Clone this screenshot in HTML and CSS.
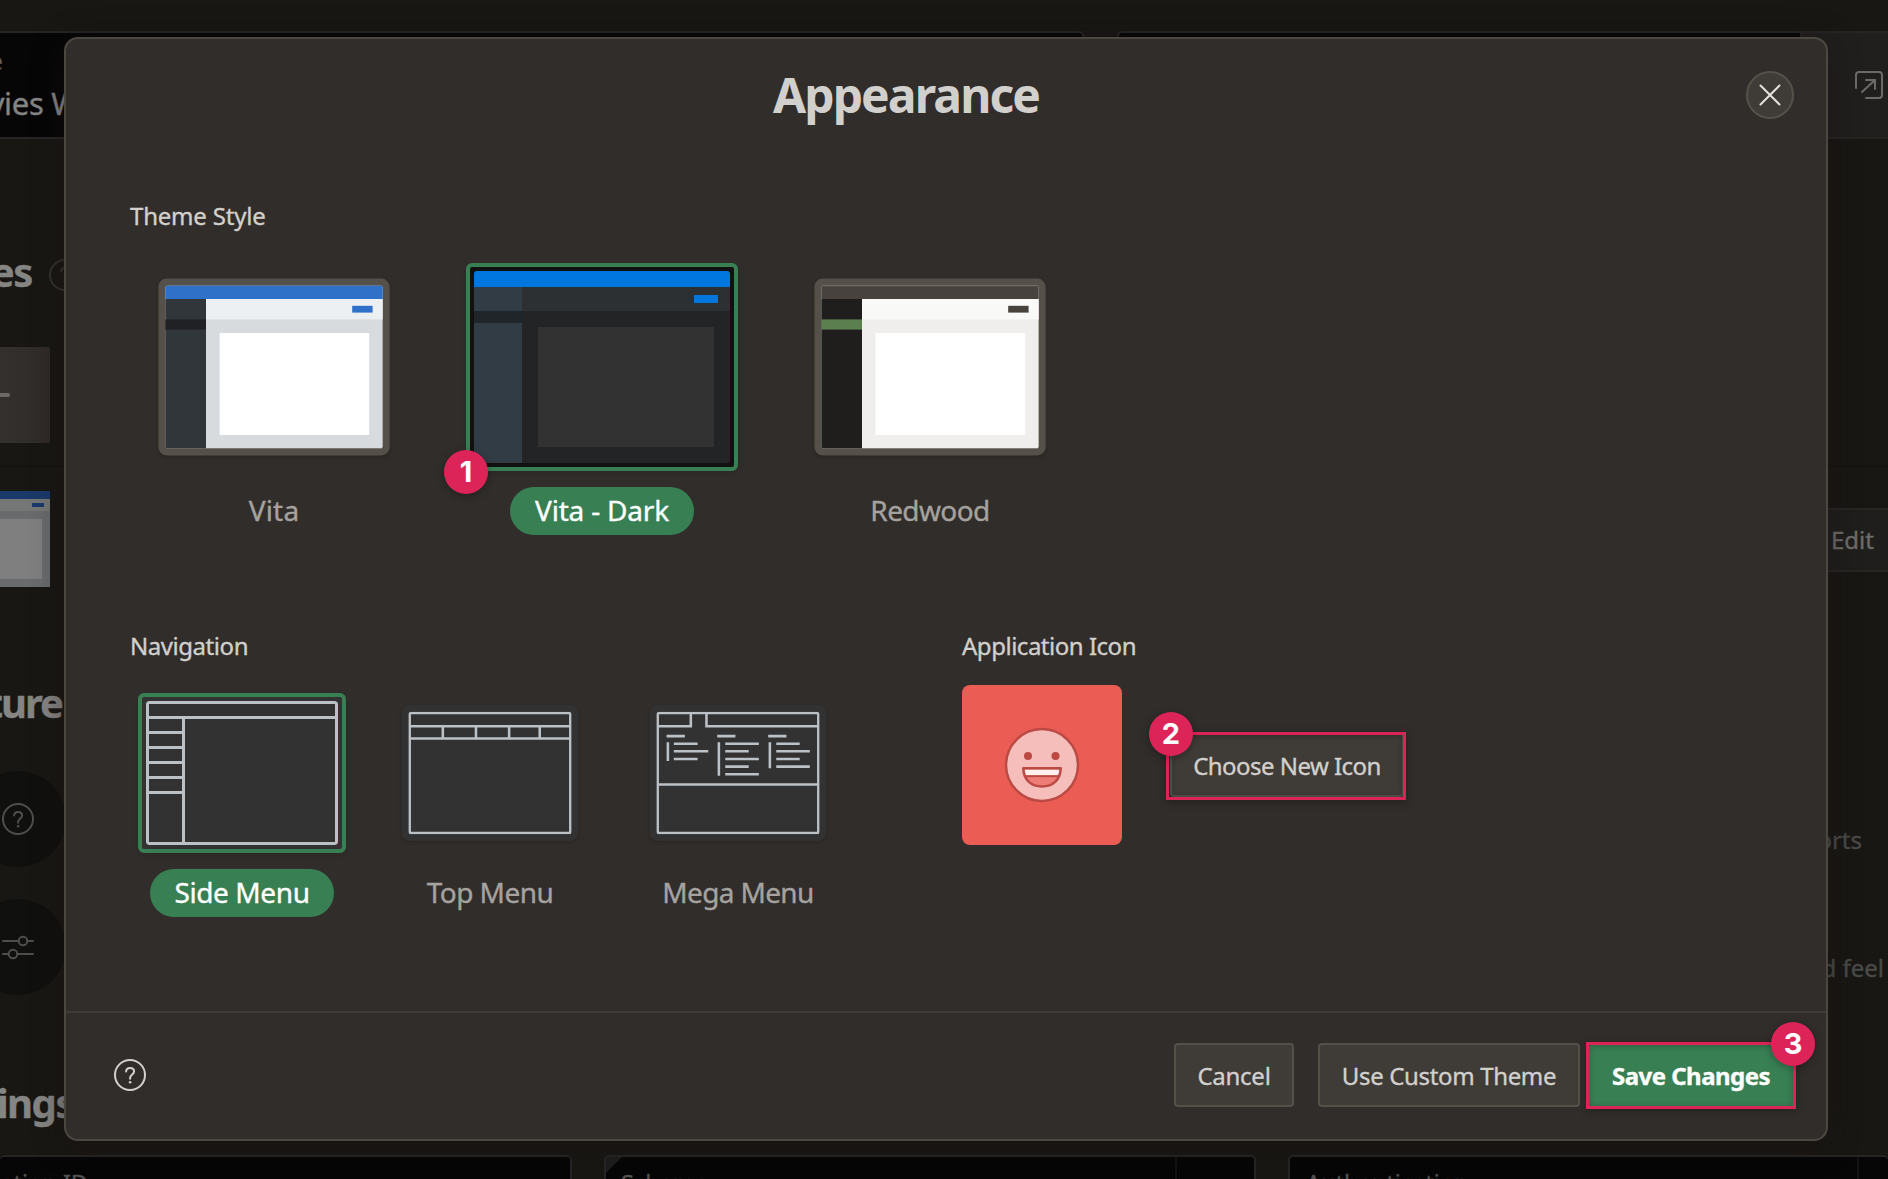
FILE: index.html
```html
<!DOCTYPE html>
<html lang="en">
<head>
<meta charset="utf-8">
<title>Appearance</title>
<link rel="stylesheet" href="styles.css">
</head>
<body>
<svg class="defs" width="0" height="0">
  <symbol id="help" viewBox="0 0 32 32">
    <circle cx="16" cy="16" r="15" fill="none" stroke="currentColor" stroke-width="2"/>
    <path d="M12.1 12.6c0-2.3 1.7-3.7 4-3.7s4 1.5 4 3.6c0 2.9-4 3.2-4 6.5v.8" fill="none" stroke="currentColor" stroke-width="2" stroke-linecap="round"/>
    <circle cx="16.1" cy="23.2" r="1.3" fill="currentColor"/>
  </symbol>
</svg>

<div class="page">
  <div class="page-bar"></div>
  <div class="page-head">
    <div class="panel panel-name">
      <span class="name-label">Name</span>
      <span class="name-value">Movies Watchlist</span>
    </div>
    <div class="panel panel-look">
      <div class="open-cell">
        <svg width="28" height="28" viewBox="0 0 28 28" fill="none" stroke="currentColor" stroke-width="2" stroke-linecap="round" stroke-linejoin="round"><path d="M1 17V4a3 3 0 0 1 3-3h20a3 3 0 0 1 3 3v20a3 3 0 0 1-3 3H11M7 21 20 9M11 9h9v9"/></svg>
      </div>
    </div>
  </div>

  <div class="page-main">
    <div class="left">
      <div class="left-title t1"><span>Pages</span><svg class="hint" width="32" height="32"><use href="#help"/></svg></div>
      <div class="add-box"><i></i></div>
      <div class="rule"></div>
      <svg class="mini" width="50" height="96" viewBox="0 0 50 96">
        <rect width="50" height="96" fill="#696b6d"/><rect width="50" height="8" fill="#1b3969"/>
        <rect y="8" width="50" height="12" fill="#747776"/><rect x="32" y="12" width="12" height="4" fill="#1b3969"/>
        <rect y="28" width="42" height="60" fill="#7f7f7f"/>
      </svg>
      <div class="left-title t2"><span>Feature</span></div>
      <div class="disc d1"><svg width="32" height="32"><use href="#help"/></svg></div>
      <div class="disc d2"><svg width="32" height="32" viewBox="0 0 32 32" fill="none" stroke="currentColor" stroke-width="2" stroke-linecap="round"><path d="M1 10h15.500M25.500 10H31M1 23h5.500M15.500 23H31"/><circle cx="21" cy="10" r="4.300"/><circle cx="11" cy="23" r="4.300"/></svg></div>
      <div class="left-title t3"><span>Settings</span></div>
    </div>
    <div class="right">
      <div class="rule"></div>
      <div class="edit">Edit</div>
      <div class="note n1">Reports</div>
      <div class="note n2">and feel</div>
    </div>
  </div>

  <div class="page-foot">
    <div class="panel p1"><span>Application ID</span></div>
    <div class="panel p2"><span>Schema</span></div>
    <div class="panel p3"><span>Authentication</span></div>
  </div>
</div>

<div class="dialog">
  <div class="dialog-head">
    <h1>Appearance</h1>
    <button class="close"><svg width="22" height="22" viewBox="0 0 22 22"><path d="M1.500 1.500l19 19M20.500 1.500l-19 19" stroke="currentColor" stroke-width="2" stroke-linecap="round"/></svg></button>
  </div>

  <div class="dialog-body">
    <h2 class="theme-h">Theme Style</h2>
    <div class="themes">
      <div class="option">
        <div class="card theme">
          <svg width="256" height="192" viewBox="0 0 256 192">
            <rect width="256" height="192" fill="#d8dbde"/><rect width="256" height="16" fill="#2f70c8"/>
            <rect x="48" y="16" width="208" height="24" fill="#ecf0f2"/>
            <rect y="16" width="48" height="176" fill="#31363a"/><rect y="40" width="48" height="12" fill="#202124"/>
            <rect x="220" y="24" width="24" height="8" fill="#2f70c8"/><rect x="64" y="56" width="176" height="120" fill="#fff"/>
          </svg>
        </div>
        <span class="name s-vita">Vita</span>
      </div>
      <div class="option selected">
        <div class="card theme dark">
          <svg width="256" height="192" viewBox="0 0 256 192">
            <rect width="256" height="192" fill="#222426"/><rect width="256" height="16" fill="#0076df"/>
            <rect x="48" y="16" width="208" height="24" fill="#2c3033"/>
            <rect y="16" width="48" height="176" fill="#323c45"/><rect y="40" width="48" height="12" fill="#1f2529"/>
            <rect x="220" y="24" width="24" height="8" fill="#0076df"/><rect x="64" y="56" width="176" height="120" fill="#323232"/>
          </svg>
          <b class="badge b1">1</b>
        </div>
        <span class="name s-dark">Vita - Dark</span>
      </div>
      <div class="option">
        <div class="card theme">
          <svg width="256" height="192" viewBox="0 0 256 192">
            <rect width="256" height="192" fill="#efeeed"/><rect width="256" height="16" fill="#47423e"/><path d="M0 .5h256" stroke="#76716c"/>
            <rect x="48" y="16" width="208" height="24" fill="#f9f9f8"/>
            <rect y="16" width="48" height="176" fill="#201e1c"/><rect y="40" width="48" height="12" fill="#5c7f4f"/>
            <rect x="220" y="24" width="24" height="8" fill="#47423e"/><rect x="64" y="56" width="176" height="120" fill="#fff"/>
          </svg>
        </div>
        <span class="name s-red">Redwood</span>
      </div>
    </div>

    <div class="split">
      <div class="nav-col">
        <h2 class="nav-h">Navigation</h2>
        <div class="navs">
          <div class="option selected">
            <div class="card nav">
              <svg width="192" height="144" viewBox="0 0 192 144" class="wire"><rect x="1.500" y="1.500" width="189" height="141" rx="1.500"/><path d="M1 16.500h190M37.500 16.500v126M1 31.500h36M1 46.500h36M1 61.500h36M1 76.500h36M1 91.500h36"/></svg>
            </div>
            <span class="name s-side">Side Menu</span>
          </div>
          <div class="option">
            <div class="card nav">
              <svg width="192" height="144" viewBox="0 0 192 144" class="wire"><rect x="1.500" y="1.500" width="189" height="141" rx="1.500"/><path d="M1 16.900h190M1 31.400h190M40.500 17v14M79.500 17v14M118.500 17v14M154.500 17v14"/></svg>
            </div>
            <span class="name s-top">Top Menu</span>
          </div>
          <div class="option">
            <div class="card nav">
              <svg width="192" height="144" viewBox="0 0 192 144" class="wire"><rect x="1.500" y="1.500" width="189" height="141" rx="1.500"/><path d="M1 16.900h39.500V1M58.900 1v15.900H191M1 85.500h190"/><path d="M12 28.600h21.500M71.500 28.600H93M131.500 28.600H153M13.500 35.700V58M73.500 35.700v39.600M133.500 35.700v30.600M20.500 37.600h28M20.500 46.500H61M20.500 55.600h28M81 37.600h39.500M81 46.500h27.600M81 55.600h39.500M81 64.500h27.600M81 73.500h39.500M141 37.600h27.600M141 46.500h39.500M141 55.600h27.600M141 64.500h39.500"/></svg>
            </div>
            <span class="name s-mega">Mega Menu</span>
          </div>
        </div>
      </div>
      <div class="icon-col">
        <h2 class="icon-h">Application Icon</h2>
        <div class="icon-row">
          <svg class="app-icon" width="160" height="160" viewBox="0 0 160 160">
            <rect width="160" height="160" rx="8" fill="#eb5c55"/>
            <circle cx="80" cy="80" r="36" fill="#f5beba" stroke="#bc4a44" stroke-width="2.500"/>
            <circle cx="66" cy="71" r="4" fill="#bc4a44"/><circle cx="93.500" cy="71" r="4" fill="#bc4a44"/>
            <path d="M61.300 83.300h37.400c0 11.200-7.800 18.100-18.700 18.100s-18.700-6.900-18.700-18.100z" fill="#ef7d77"/>
            <path d="M62.500 84.500h35l-1.200 5.800H63.700z" fill="#fdefee"/>
            <path d="M64 91.200h32" stroke="#bc4a44" stroke-width="2"/>
            <path d="M61.300 83.300h37.400c0 11.200-7.800 18.100-18.700 18.100s-18.700-6.900-18.700-18.100z" fill="none" stroke="#bc4a44" stroke-width="2.500" stroke-linejoin="round"/>
          </svg>
          <div class="marked"><button class="btn choose">Choose New Icon</button><b class="badge b2">2</b></div>
        </div>
      </div>
    </div>
  </div>

  <div class="dialog-foot">
    <svg class="foot-help" width="32" height="32"><use href="#help"/></svg>
    <button class="btn cancel">Cancel</button>
    <button class="btn custom">Use Custom Theme</button>
    <div class="marked save-wrap"><button class="btn save">Save Changes</button><b class="badge b3">3</b></div>
  </div>
</div>
</body>
</html>
```
FILE: styles.css
```css
* { box-sizing: border-box; }
body {
  margin: 0; width: 1888px; height: 1179px; overflow: hidden; position: relative;
  background: #181714; font-family: "Noto Sans", "Open Sans", sans-serif; color: #d2d0cd;
  -webkit-text-stroke: .35px currentColor;
}
.defs { position: absolute; }
svg { display: block; }

/* dimmed page underneath the dialog */
.page { display: flex; flex-direction: column; height: 1179px; }
.page-bar { height: 31px; }
.page-head { height: 108px; display: flex; gap: 33px; }
.panel { background: #060606; border: 2px solid #262524; }
.panel-name { width: 1084px; border-left: 0; border-radius: 0 5px 5px 0; display: flex; flex-direction: column; color: #858585; white-space: nowrap; }
.name-label { font-size: 24px; line-height: 32px; margin: 12px 0 0 -65px; color: #626262; }
.name-value { font-size: 31px; line-height: 44px; letter-spacing: -.3px; margin: 4px 0 0 -57px; }
.panel-look { flex: 1; border-right: 0; border-radius: 5px 0 0 5px; display: flex; justify-content: flex-end; }
.open-cell { width: 88px; border-left: 2px solid #262524; background: #201f1e; padding: 38px 0 0 53px; color: #6c6a68; }
.page-main { height: 1016px; display: flex; justify-content: space-between; }
.left { width: 160px; color: #4f4e4c; }
.left-title { height: 56px; line-height: 56px; font-size: 40px; font-weight: 700; letter-spacing: -1.3px; color: #858583; display: flex; align-items: center; white-space: nowrap; }
.t1 { margin-top: 105px; gap: 17px; width: 81px; justify-content: flex-end; }
.t2 { margin-top: 88px; width: 62px; justify-content: flex-end; letter-spacing: -2px; }
.t3 { margin-top: 80px; margin-left: -78px; letter-spacing: -1.500px; }
.hint { flex: none; color: #343330; margin-top: 6px; }
.add-box { margin-top: 47px; width: 50px; height: 96px; background: linear-gradient(90deg, #34302d, #2f2b28); border-radius: 0 2px 2px 0; display: flex; align-items: center; }
.add-box i { width: 10px; height: 4px; border-radius: 0 2px 2px 0; background: #6c6967; }
.left .rule { margin-top: 22px; }
.rule { height: 2px; background: #141310; }
.mini { margin-top: 24px; }
.disc { width: 96px; height: 96px; margin-left: -30px; border-radius: 50%; background: #10100e; display: flex; align-items: center; justify-content: center; }
.d1 { margin-top: 40px; }
.d2 { margin-top: 32px; }
.right { width: 96px; color: #4b4a48; font-size: 24px; line-height: 32px; }
.right .rule { margin-top: 326px; }
.edit { margin-top: 41px; height: 64px; line-height: 60px; padding-left: 39px; background: #1f1e1d; border: 2px solid #272625; border-width: 2px 0; color: #6d6c6a; }
.note { display: flex; justify-content: flex-end; white-space: nowrap; }
.n1 { margin-top: 252px; padding-right: 26px; }
.n2 { margin-top: 96px; padding-right: 4px; }
.page-foot { height: 24px; overflow: hidden; display: flex; font-size: 23.5px; line-height: 30px; color: #525252; white-space: nowrap; }
.page-foot .panel { height: 60px; padding-top: 11px; border-radius: 5px; }
.p1 { width: 572px; border-left: 0; }
.p1 span { margin-left: -67px; }
.page-foot .p2 { width: 652px; margin-left: 32px; padding-left: 15px; background: linear-gradient(135deg, #1d1d1d 11px, transparent 11.500px), linear-gradient(90deg, transparent 569px, #121212 569px, #121212 571px, transparent 571px), #060606; }
.page-foot .p3 { flex: 1; margin-left: 32px; padding-left: 16px; border-right: 0; background: linear-gradient(90deg, transparent 567px, #121212 567px, #121212 569px, transparent 569px), #060606; }

/* dialog */
.dialog {
  position: absolute; left: 64px; top: 37px; width: 1764px; height: 1104px;
  display: flex; flex-direction: column;
  background: #312d2a; border: 2px solid #4b4741; border-radius: 14px;
  box-shadow: 0 4px 32px rgba(26, 16, 16, .45);
}
.dialog-head { height: 112px; display: flex; align-items: center; padding-right: 32px; }
h1, h2 { margin: 0; }
h1 { flex: 1; text-align: center; font-size: 48px; line-height: 64px; letter-spacing: -1.900px; font-weight: 700; -webkit-text-stroke: 0; }
.close { width: 48px; height: 48px; padding: 0; border-radius: 50%; background: #3f3b37; border: 2px solid #55514a; color: #e4e1de; display: flex; align-items: center; justify-content: center; }
.dialog-body { flex: 1; padding: 49px 0 0 64px; }
h2 { font-size: 24px; line-height: 32px; font-weight: 400; }
.theme-h { letter-spacing: -.2px; }
.nav-h { letter-spacing: -.45px; }
.icon-h { letter-spacing: -.48px; }
.themes { display: flex; gap: 56px; padding-left: 8px; margin-top: 31px; }
.split { display: flex; margin-top: 95px; }
.nav-col { width: 832px; }
.navs { display: flex; gap: 40px; padding-left: 8px; margin-top: 31px; }
.option { display: flex; flex-direction: column; align-items: center; gap: 16px; }
.card { transform: scale(.85); border-radius: 8px; box-shadow: 0 2px 4px rgba(0, 0, 0, .12); position: relative; }
.card svg { border-radius: 3px; }
.theme { border: 8px solid #55514a; border-radius: 10px; background: #55514a; }
.nav { padding: 8px; border-radius: 10px; background: #323232; }
.selected .card { transform: none; border: 4px solid #387f54; padding: 4px; border-radius: 6px; }
.dark { background: #111; }
.wire { fill: none; stroke: #bcc1c6; stroke-width: 3; }
.name { height: 48px; line-height: 46px; padding: 0 24px; border-radius: 24px; font-size: 28px; color: #a5a29f; white-space: nowrap; }
.selected .name { background: #387f54; color: #fff; min-width: 184px; text-align: center; }
.s-vita { letter-spacing: .2px; }
.s-dark { letter-spacing: -.2px; }
.s-red { letter-spacing: -.6px; }
.s-side { letter-spacing: -.4px; }
.s-top { letter-spacing: -.55px; }
.s-mega { letter-spacing: -.65px; }

.icon-row { display: flex; align-items: center; gap: 48px; margin-top: 23px; }
.btn { display: block; height: 64px; padding: 1px 0 0; border: 2px solid #55514a; border-radius: 4px; background: #3f3b37; color: #d2d0cd; font: 400 24px/58px "Noto Sans", "Open Sans", sans-serif; text-align: center; white-space: nowrap; -webkit-text-stroke: .35px currentColor; }
.marked { position: relative; }
.marked::after { content: ""; position: absolute; inset: -1px -2px -3px -4px; border: 3px solid #dd2459; box-shadow: 0 2px 8px rgba(0, 0, 0, .3), inset 0 1px 6px rgba(0, 0, 0, .25); }
.choose { width: 234px; letter-spacing: -.54px; padding-top: 2px; }
.badge { position: absolute; z-index: 2; width: 44px; height: 44px; border-radius: 50%; background: #dd2459; color: #fff; font: 700 29px/44px Inter, "Liberation Sans", sans-serif; text-align: center; box-shadow: 0 2px 8px rgba(0, 0, 0, .3); -webkit-text-stroke: 0; }
.b1 { left: -26px; top: 183px; }
.b2 { left: -21px; top: -21px; }
.b3 { right: -21px; top: -21px; }

.dialog-foot { height: 128px; border-top: 2px solid #3f3b38; display: flex; align-items: center; padding: 0 32px 2px 48px; }
.cancel { width: 120px; margin: 0 24px 0 auto; letter-spacing: -.25px; }
.custom { width: 262px; margin: 0 8px 0 0; letter-spacing: -.35px; }
.save-wrap::after { inset: -1px -2px -2px -2px; }
.save { width: 206px; background: #387f54; border-color: #387f54; color: #fff; font-weight: 700; letter-spacing: -.53px; }
```
